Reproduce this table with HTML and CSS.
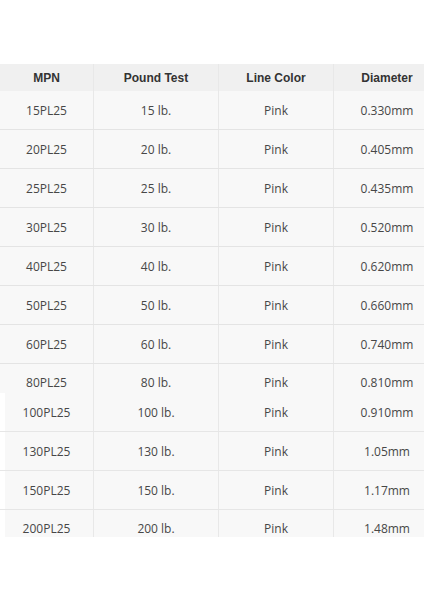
FILE: index.html
```html
<!DOCTYPE html>
<html>
<head>
<meta charset="utf-8">
<link rel="stylesheet" href="styles.css">
</head>
<body>
<div class="page">
  <div class="table">
    <div class="row head">
      <div class="cell">MPN</div><div class="cell">Pound Test</div><div class="cell">Line Color</div><div class="cell">Diameter</div>
    </div>
    <div class="row"><div class="cell">15PL25</div><div class="cell">15 lb.</div><div class="cell">Pink</div><div class="cell">0.330mm</div></div>
    <div class="row"><div class="cell">20PL25</div><div class="cell">20 lb.</div><div class="cell">Pink</div><div class="cell">0.405mm</div></div>
    <div class="row"><div class="cell">25PL25</div><div class="cell">25 lb.</div><div class="cell">Pink</div><div class="cell">0.435mm</div></div>
    <div class="row"><div class="cell">30PL25</div><div class="cell">30 lb.</div><div class="cell">Pink</div><div class="cell">0.520mm</div></div>
    <div class="row"><div class="cell">40PL25</div><div class="cell">40 lb.</div><div class="cell">Pink</div><div class="cell">0.620mm</div></div>
    <div class="row"><div class="cell">50PL25</div><div class="cell">50 lb.</div><div class="cell">Pink</div><div class="cell">0.660mm</div></div>
    <div class="row"><div class="cell">60PL25</div><div class="cell">60 lb.</div><div class="cell">Pink</div><div class="cell">0.740mm</div></div>
    <div class="row cut-a"><div class="cell">80PL25</div><div class="cell">80 lb.</div><div class="cell">Pink</div><div class="cell">0.810mm</div></div>
  </div>
  <div class="table lower">
    <div class="row"><div class="cell">100PL25</div><div class="cell">100 lb.</div><div class="cell">Pink</div><div class="cell">0.910mm</div></div>
    <div class="row"><div class="cell">130PL25</div><div class="cell">130 lb.</div><div class="cell">Pink</div><div class="cell">1.05mm</div></div>
    <div class="row"><div class="cell">150PL25</div><div class="cell">150 lb.</div><div class="cell">Pink</div><div class="cell">1.17mm</div></div>
    <div class="row cut-b"><div class="cell">200PL25</div><div class="cell">200 lb.</div><div class="cell">Pink</div><div class="cell">1.48mm</div></div>
  </div>
</div>
</body>
</html>
```

FILE: styles.css
```css
html, body {
  margin: 0;
  padding: 0;
  background: #ffffff;
}
body {
  width: 424px;
  height: 600px;
  overflow: hidden;
}
.page {
  padding-top: 64px;
  width: 424px;
  overflow: hidden;
}
.table {
  width: 440px;
  display: flex;
  flex-direction: column;
}
.row {
  display: grid;
  grid-template-columns: 94px 125px 115px 106px;
  height: 39px;
  box-sizing: border-box;
  border-bottom: 1px solid #e4e4e4;
  background: #f8f8f8;
  overflow: hidden;
  align-items: start;
}
.cell {
  height: 38px;
  line-height: 40px;
  text-align: center;
  font-family: "Open Sans", sans-serif;
  font-size: 12px;
  color: #474747;
  border-right: 1px solid #e8e8e8;
  box-sizing: border-box;
  white-space: nowrap;
}
.cell:last-child {
  border-right: none;
}
.head {
  height: 27px;
  background: #f0f0f0;
  border-bottom: none;
}
.head .cell {
  height: 27px;
  line-height: 28px;
  font-family: "Liberation Sans", Arial, sans-serif;
  font-weight: bold;
  color: #333333;
}
.cut-a {
  height: 29px;
  border-bottom: none;
}
.cut-a .cell {
  line-height: 38px;
}
.cut-b {
  height: 27px;
  border-bottom: none;
}
.cut-b .cell {
  line-height: 38px;
}
.lower .row .cell:first-child {
  box-shadow: inset 5px 0 0 #ffffff;
}
.lower .row {
  border-bottom-color: #e6e6e6;
}
```
